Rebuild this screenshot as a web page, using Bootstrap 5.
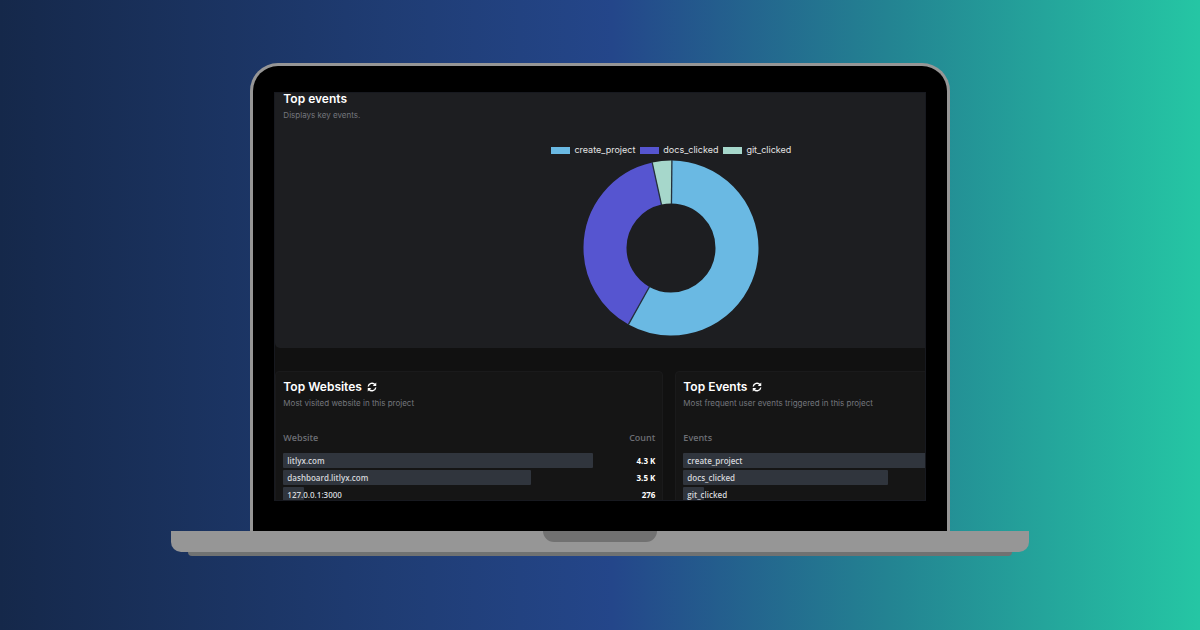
<!DOCTYPE html>
<html lang="en">
<head>
<meta charset="utf-8">
<meta name="viewport" content="width=device-width, initial-scale=1">
<title>Analytics dashboard</title>
<link href="https://cdn.jsdelivr.net/npm/bootstrap@5.3.0/dist/css/bootstrap.min.css" rel="stylesheet">
<style>
  body {
    font-family: "Inter", "Liberation Sans", sans-serif;
    background: linear-gradient(90deg, #15284a 0%, #1f3c73 32%, #24468a 51%, #238392 74%, #25c6a4 100%);
    padding-bottom: 11px;
  }
  .laptop { width: 71.5%; }
  .lid {
    width: 81.5%;
    background: #000;
    border: 3px solid #969696;
    border-bottom: 0;
    border-radius: 28px 28px 0 0;
    padding: 26px 21px 30px 21px;
  }
  .screen { aspect-ratio: 652 / 409; background: #111; border: 1px solid #17191f; }
  .dash { width: 788px; }
  .panels { display: grid; grid-template-columns: 1fr 1fr; column-gap: 12px; }
  .panel { background: #151515; border: 1px solid #1a1a1b; border-radius: 4px; padding: 7px; }
  .panel-chart { background: #1d1e21; border: 0; border-radius: 0 0 5px 5px; padding: 0 8px 12px; margin-bottom: 23px; }
  .panel-title { font-size: 12px; line-height: 16px; font-weight: 600; color: #fff; margin: 0; }
  .panel-chart .panel-title { line-height: 12px; }
  .panel-note { font-size: 8px; line-height: 16px; color: #74767d; margin: 0; }
  .panel-chart .panel-note { margin: 2px 0 19px; }
  .legend-row { font-size: 9px; line-height: 16px; color: #e4e4e4; gap: 5px; }
  .swatch { width: 19px; height: 7px; margin-right: 4px; }
  .donut { width: 176px; height: 176px; margin-top: 2px; }
  .refresh { color: #fff; line-height: 0; margin-left: 5px; }
  .data-table { font-family: "Open Sans", "Noto Sans", sans-serif; font-size: 8px; line-height: 15px; color: #d4d6da; margin-top: 19px; }
  .data-table th { font-weight: 600; font-size: 9px; color: #6c6e74; padding: 0 0 7px; line-height: 16px; }
  .data-table td { padding: 0 0 2px; }
  .data-table td:last-child { width: 62px; text-align: right; font-weight: 700; color: #fff; }
  .data-table span { white-space: nowrap; font-weight: 600; }
  .meter { height: 15px; background: #30353d; border-radius: 1px; padding-left: 4px; }
  .base { height: 21px; background: #969696; border-radius: 0 0 10px 10px; }
  .notch { width: 114px; height: 11px; background: #717171; border-radius: 0 0 11px 11px; }
  .foot { width: 96%; height: 4px; background: #707272; border-radius: 0 0 4px 4px; }
</style>
</head>
<body class="min-vh-100 d-flex align-items-center justify-content-center overflow-hidden">
<main class="laptop">
  <div class="lid mx-auto">
    <div class="screen overflow-hidden">
      <div class="dash">
        <section class="panel panel-chart">
          <h2 class="panel-title">Top events</h2>
          <p class="panel-note">Displays key events.</p>
          <div class="d-flex flex-column align-items-center ps-1">
            <div class="legend-row d-flex">
              <div class="d-flex align-items-center"><i class="swatch" style="background:#6ab9e3"></i>create_project</div>
              <div class="d-flex align-items-center"><i class="swatch" style="background:#5655d0"></i>docs_clicked</div>
              <div class="d-flex align-items-center"><i class="swatch" style="background:#a6d7cb"></i>git_clicked</div>
            </div>
            <svg class="donut" viewBox="-88 -88 176 176" role="img" aria-label="Share of events">
              <g transform="rotate(-89.4)" fill="none" stroke-width="43">
                <circle r="66" pathLength="360" stroke="#6ab9e3" stroke-dasharray="208.5 151.5"/>
                <circle r="66" pathLength="360" stroke="#5655d0" stroke-dasharray="0 208.5 138.5 13"/>
                <circle r="66" pathLength="360" stroke="#a6d7cb" stroke-dasharray="0 347 13 0"/>
                <g stroke="#25303c" stroke-width="1.3">
                  <path d="M44 0H88"/>
                  <path d="M44 0H88" transform="rotate(208.5)"/>
                  <path d="M44 0H88" transform="rotate(347)"/>
                </g>
              </g>
            </svg>
          </div>
        </section>
        <div class="panels">
          <section class="panel">
            <div class="d-flex align-items-center">
              <h2 class="panel-title">Top Websites</h2>
              <button type="button" class="btn p-0 border-0 refresh" aria-label="Refresh websites">
                <svg width="10" height="10" viewBox="0 0 20 20" fill="none" stroke="currentColor" stroke-width="2.8"><path d="M2.5 9A7.5 7.5 0 0 1 16 5.5M17.500 11A7.500 7.500 0 0 1 4 14.500"/><path d="M18.500 1v7h-7zM1.500 19v-7h7z" fill="currentColor" stroke="none"/></svg>
              </button>
            </div>
            <p class="panel-note">Most visited website in this project</p>
            <table class="data-table w-100">
              <thead><tr><th scope="col">Website</th><th scope="col" class="text-end">Count</th></tr></thead>
              <tbody>
                <tr><td><div class="meter" style="width:100%"><span>litlyx.com</span></div></td><td>4.3 K</td></tr>
                <tr><td><div class="meter" style="width:80%"><span>dashboard.litlyx.com</span></div></td><td>3.5 K</td></tr>
                <tr><td><div class="meter" style="width:6.5%"><span>127.0.0.1:3000</span></div></td><td>276</td></tr>
              </tbody>
            </table>
          </section>
          <section class="panel">
            <div class="d-flex align-items-center">
              <h2 class="panel-title">Top Events</h2>
              <button type="button" class="btn p-0 border-0 refresh" aria-label="Refresh events">
                <svg width="10" height="10" viewBox="0 0 20 20" fill="none" stroke="currentColor" stroke-width="2.8"><path d="M2.5 9A7.5 7.5 0 0 1 16 5.5M17.500 11A7.500 7.500 0 0 1 4 14.500"/><path d="M18.500 1v7h-7zM1.500 19v-7h7z" fill="currentColor" stroke="none"/></svg>
              </button>
            </div>
            <p class="panel-note">Most frequent user events triggered in this project</p>
            <table class="data-table w-100">
              <thead><tr><th scope="col">Events</th><td></td></tr></thead>
              <tbody>
                <tr><td><div class="meter" style="width:100%"><span>create_project</span></div></td><td></td></tr>
                <tr><td><div class="meter" style="width:66%"><span>docs_clicked</span></div></td><td></td></tr>
                <tr><td><div class="meter" style="width:6.5%"><span>git_clicked</span></div></td><td></td></tr>
              </tbody>
            </table>
          </section>
        </div>
      </div>
    </div>
  </div>
  <div class="base"><div class="notch mx-auto"></div></div>
  <div class="foot mx-auto"></div>
</main>
<script src="https://cdn.jsdelivr.net/npm/bootstrap@5.3.0/dist/js/bootstrap.bundle.min.js"></script>
</body>
</html>
